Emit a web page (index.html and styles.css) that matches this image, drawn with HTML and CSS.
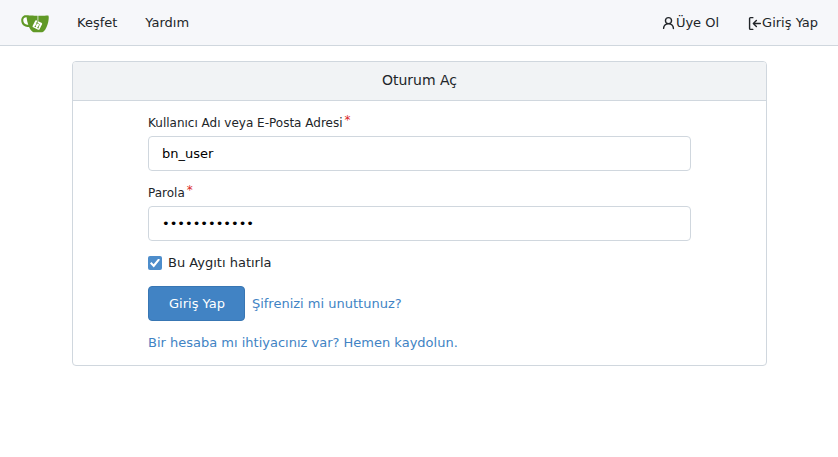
FILE: index.html
```html
<!DOCTYPE html>
<html lang="tr">
<head>
<meta charset="utf-8">
<meta name="viewport" content="width=device-width, initial-scale=1">
<title>Oturum Aç</title>
<link rel="stylesheet" href="styles.css">
</head>
<body>
<nav class="navbar">
  <div class="nav-group">
    <a class="logo" href="#" aria-label="Gitea">
      <svg viewBox="0 0 640 640" width="28" height="28" aria-hidden="true">
        <path fill="#fff" d="m395.9 484.2-126.9-61c-12.5-6-17.9-21.2-11.8-33.8l61-126.9c6-12.5 21.2-17.9 33.8-11.8 17.2 8.3 27.1 13 27.1 13l-.1-109.2 16.7-.1.1 117.1s57.4 24.2 83.1 40.1c3.7 2.3 10.2 6.8 12.9 14.4 2.1 6.1 2 13.1-1 19.3l-61 126.9c-6.2 12.7-21.4 18.1-33.9 12"/>
        <path fill="#fff" d="M128 180c-60-4-88 40-70 115 12 40 60 70 120 72z"/>
        <path fill="#609926" d="M622.7 149.8c-4.1-4.1-9.6-4-9.6-4s-117.2 6.6-177.9 8c-13.3.3-26.5.6-39.6.7v117.2c-5.5-2.6-11.1-5.3-16.6-7.9 0-36.4-.1-109.2-.1-109.2-29 .4-89.2-2.2-89.2-2.2s-141.4-7.1-156.8-8.5c-9.8-.6-22.5-2.1-39 1.5-8.7 1.8-33.5 7.4-53.8 26.9C-4.9 212.4 6.6 276.2 8 285.8c1.7 11.7 6.9 44.2 31.7 72.5 45.8 56.1 144.4 54.8 144.4 54.8s12.1 28.9 30.6 55.5c25 33.1 50.7 58.9 75.7 62 63 0 188.9-.1 188.9-.1s12 .1 28.3-10.3c14-8.5 26.5-23.4 26.5-23.4S547 483 565 451.5c5.5-9.7 10.1-19.1 14.1-28 0 0 55.2-117.1 55.2-231.1-1.1-34.5-9.6-40.6-11.6-42.6M125.6 353.9c-25.9-8.5-36.9-18.7-36.9-18.7S69.6 321.8 60 295.4c-16.5-44.2-1.4-71.2-1.4-71.2s8.4-22.5 38.5-30c13.8-3.7 31-3.1 31-3.1s7.1 59.4 15.7 94.2c7.2 29.2 24.8 77.7 24.8 77.7s-26.1-3.1-43-9.1m300.3 107.6s-6.1 14.5-19.6 15.4c-5.8.4-10.3-1.2-10.3-1.2s-.3-.1-5.3-2.1l-112.9-55s-10.9-5.7-12.8-15.6c-2.2-8.1 2.7-18.1 2.7-18.1L322 273s4.8-9.7 12.2-13c.6-.3 2.3-1 4.5-1.5 8.1-2.1 18 2.8 18 2.8L467.4 315s12.6 5.7 15.3 16.2c1.9 7.4-.5 14-1.8 17.2-6.3 15.4-55 113.1-55 113.1"/>
        <path fill="#609926" d="M326.8 380.1c-8.2.1-15.4 5.8-17.3 13.8s2 16.3 9.1 20c7.7 4 17.5 1.8 22.7-5.4 5.1-7.1 4.3-16.9-1.8-23.1l24-49.1c1.5.1 3.7.2 6.2-.5 4.1-.9 7.1-3.6 7.1-3.6 4.2 1.8 8.6 3.8 13.2 6.1 4.8 2.4 9.3 4.9 13.4 7.3.9.5 1.8 1.1 2.8 1.9 1.6 1.3 3.4 3.1 4.7 5.5 1.9 5.5-1.9 14.9-1.9 14.9-2.3 7.6-18.4 40.6-18.4 40.6-8.1-.2-15.3 5-17.7 12.5-2.6 8.1 1.1 17.3 8.9 21.3s17.4 1.7 22.5-5.3c5-6.8 4.6-16.3-1.1-22.6 1.9-3.7 3.7-7.4 5.6-11.3 5-10.4 13.5-30.4 13.5-30.4.9-1.7 5.7-10.3 2.7-21.3-2.5-11.4-12.6-16.7-12.6-16.7-12.2-7.9-29.2-15.2-29.2-15.2s0-4.1-1.1-7.1c-1.1-3.1-2.8-5.1-3.9-6.3 4.7-9.7 9.4-19.3 14.1-29-4.1-2-8.1-4-12.2-6.1-4.8 9.8-9.7 19.7-14.5 29.5-6.7-.1-12.9 3.5-16.1 9.4-3.4 6.3-2.7 14.1 1.9 19.8l-24.6 50.4"/>
      </svg>
    </a>
    <a class="nav-link" href="#">Keşfet</a>
    <a class="nav-link" href="#">Yardım</a>
  </div>
  <div class="nav-group">
    <a class="nav-link" href="#">
      <svg class="icon" viewBox="0 0 16 16" aria-hidden="true"><path d="M10.561 8.073a6 6 0 0 1 3.432 5.142.75.75 0 1 1-1.498.07 4.5 4.5 0 0 0-8.99 0 .75.75 0 0 1-1.498-.07 6 6 0 0 1 3.431-5.142 3.999 3.999 0 1 1 5.123 0M10.5 5a2.5 2.5 0 1 0-5 0 2.5 2.5 0 0 0 5 0"/></svg>Üye Ol</a>
    <a class="nav-link" href="#">
      <svg class="icon" viewBox="0 0 16 16" aria-hidden="true"><path d="M2 2.75C2 1.784 2.784 1 3.75 1h2.5a.75.75 0 0 1 0 1.5h-2.5a.25.25 0 0 0-.25.25v10.5c0 .138.112.25.25.25h2.5a.75.75 0 0 1 0 1.5h-2.5A1.75 1.75 0 0 1 2 13.25Zm6.56 4.5h5.69a.75.75 0 0 1 0 1.5H8.56l1.97 1.97a.749.749 0 0 1-.326 1.275.749.749 0 0 1-.734-.215L6.22 8.53a.75.75 0 0 1 0-1.06l3.25-3.25a.749.749 0 0 1 1.275.326.749.749 0 0 1-.215.734Z"/></svg>Giriş Yap</a>
  </div>
</nav>
<main class="page">
  <section class="card">
    <h1 class="card-title">Oturum Aç</h1>
    <form class="form">
      <div class="field">
        <label class="label required" for="user">Kullanıcı Adı veya E-Posta Adresi</label>
        <input class="input" id="user" type="text" value="bn_user" required>
      </div>
      <div class="field">
        <label class="label required" for="password">Parola</label>
        <input class="input" id="password" type="password" value="abcdefghijkl" required>
      </div>
      <div class="remember">
        <input class="checkbox" id="remember" type="checkbox" checked>
        <label for="remember">Bu Aygıtı hatırla</label>
      </div>
      <div class="actions">
        <button class="button" type="submit">Giriş Yap</button>
        <a class="link" href="#">Şifrenizi mi unuttunuz?</a>
      </div>
      <a class="link" href="#">Bir hesaba mı ihtiyacınız var? Hemen kaydolun.</a>
    </form>
  </section>
</main>
</body>
</html>
```
FILE: styles.css
```css
* {
  box-sizing: border-box;
}

body {
  margin: 0;
  background: #fff;
  color: #212529;
  font: 13px/20px "DejaVu Sans", sans-serif;
}

a {
  color: inherit;
  text-decoration: none;
}

.navbar {
  display: flex;
  justify-content: space-between;
  padding: 0 6px 0 7px;
  background: #f6f7fa;
  border-bottom: 1px solid #d0d7de;
}

.nav-group {
  display: flex;
  align-items: center;
}

.logo {
  display: flex;
  padding: 8px 14px;
}

.nav-link {
  display: flex;
  align-items: center;
  padding: 13px 14px 12px;
}

.icon {
  width: 15px;
  height: 15px;
  fill: currentColor;
}

.page {
  padding: 15px 71px 15px 72px;
}

.card {
  border: 1px solid #d0d7de;
  border-radius: 4px;
  overflow: hidden;
}

.card-title {
  margin: 0;
  padding: 8px 14px 10px;
  background: #f1f3f5;
  border-bottom: 1px solid #d0d7de;
  font-size: 14px;
  font-weight: 400;
  line-height: 20px;
  text-align: center;
}

.form {
  display: flex;
  flex-direction: column;
  align-items: flex-start;
  gap: 12px;
  padding: 12px 75px;
}

.field {
  display: flex;
  flex-direction: column;
  width: 100%;
  gap: 3px;
}

.label {
  font-size: 12px;
}

.required::after {
  content: "*";
  margin-left: 2px;
  color: #db2828;
  line-height: 1;
  vertical-align: 3px;
}

.input {
  width: 100%;
  height: 35px;
  padding: 0 13px;
  background: #fff;
  border: 1px solid #d0d7de;
  border-radius: 4px;
  color: #000;
  font: inherit;
}

.remember {
  display: flex;
  align-items: center;
  gap: 6px;
}

.checkbox {
  display: grid;
  place-items: center;
  width: 14px;
  height: 14px;
  margin: 0;
  appearance: none;
  background: #4d8dcb;
  border-radius: 2px;
}

.checkbox:checked::before {
  content: "";
  width: 10px;
  height: 9px;
  background: #fff;
  clip-path: polygon(0 56%, 14% 38%, 36% 64%, 84% 0, 100% 14%, 38% 100%);
}

.actions {
  display: flex;
  align-items: center;
  gap: 7px;
  padding-top: 1px;
}

.button {
  height: 35px;
  padding: 0 19px 0 20px;
  background: #4183c4;
  border: 1px solid #3876b3;
  border-radius: 4px;
  color: #fff;
  font: inherit;
}

.link {
  color: #4183c4;
}
```
